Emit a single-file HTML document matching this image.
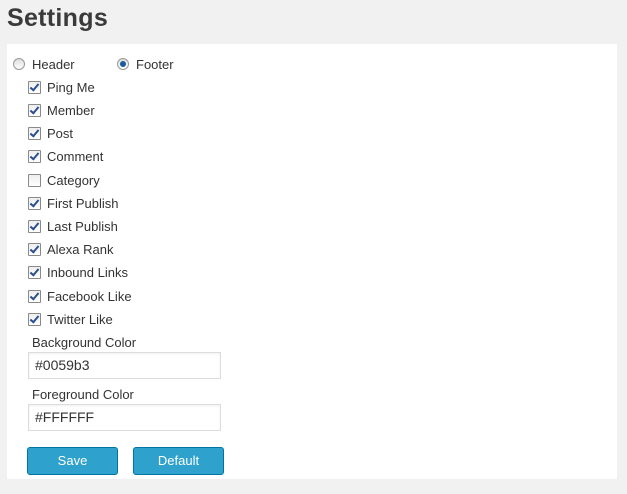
<!DOCTYPE html><html><head><style>
body{margin:0;background:#f1f1f1;font-family:"Liberation Sans",sans-serif;color:#333;width:627px;height:494px;position:relative;overflow:hidden}
h1{position:absolute;left:7px;top:4px;margin:0;font-size:25px;font-weight:bold;color:#3a3a3a;letter-spacing:.3px}
.panel{position:absolute;left:7px;top:44px;width:610px;height:435px;background:#fff}
.a{position:absolute;font-size:13px;line-height:16px}
.cb{position:absolute;width:11px;height:11px;border:1px solid #8a8a8a;background:linear-gradient(#eee,#fff);border-radius:1px}
.cb.on::after{content:"";position:absolute;left:3px;top:0px;width:3px;height:7px;border:solid #2a4f8f;border-width:0 2px 2px 0;transform:rotate(40deg)}
.rd{position:absolute;width:10px;height:10px;border:1px solid #999;border-radius:50%;background:linear-gradient(#ddd,#fff)}
.rd.on::after{content:"";position:absolute;left:2px;top:2px;width:6px;height:6px;border-radius:50%;background:#1a5b9c}
.in{position:absolute;left:28px;border:1px solid #ddd;box-shadow:inset 0 1px 2px rgba(0,0,0,.07);font-size:14px;line-height:25px;padding-left:6px;box-sizing:border-box;width:193px;height:27px}
.bt{position:absolute;top:447px;height:28px;width:91px;background:#2ea2cc;border:1px solid #0074a2;border-radius:3px;box-sizing:border-box;color:#fff;font-size:13px;text-align:center;line-height:26px}
</style></head><body>
<h1>Settings</h1>
<div class="panel"></div>
<div class="rd" style="left:13px;top:58px"></div><div class="a" style="left:32px;top:57px">Header</div>
<div class="rd on" style="left:117px;top:58px"></div><div class="a" style="left:136px;top:57px">Footer</div>
<div class="cb on" style="left:28px;top:81px"></div><div class="a" style="left:47px;top:80px">Ping Me</div>
<div class="cb on" style="left:28px;top:104px"></div><div class="a" style="left:47px;top:103px">Member</div>
<div class="cb on" style="left:28px;top:127px"></div><div class="a" style="left:47px;top:126px">Post</div>
<div class="cb on" style="left:28px;top:150px"></div><div class="a" style="left:47px;top:149px">Comment</div>
<div class="cb" style="left:28px;top:174px"></div><div class="a" style="left:47px;top:173px">Category</div>
<div class="cb on" style="left:28px;top:197px"></div><div class="a" style="left:47px;top:196px">First Publish</div>
<div class="cb on" style="left:28px;top:220px"></div><div class="a" style="left:47px;top:219px">Last Publish</div>
<div class="cb on" style="left:28px;top:243px"></div><div class="a" style="left:47px;top:242px">Alexa Rank</div>
<div class="cb on" style="left:28px;top:266px"></div><div class="a" style="left:47px;top:265px">Inbound Links</div>
<div class="cb on" style="left:28px;top:290px"></div><div class="a" style="left:47px;top:289px">Facebook Like</div>
<div class="cb on" style="left:28px;top:313px"></div><div class="a" style="left:47px;top:312px">Twitter Like</div>
<div class="a" style="left:32px;top:335px">Background Color</div>
<div class="in" style="top:352px">#0059b3</div>
<div class="a" style="left:32px;top:387px">Foreground Color</div>
<div class="in" style="top:404px">#FFFFFF</div>
<div class="bt" style="left:27px">Save</div>
<div class="bt" style="left:133px">Default</div>
</body></html>
